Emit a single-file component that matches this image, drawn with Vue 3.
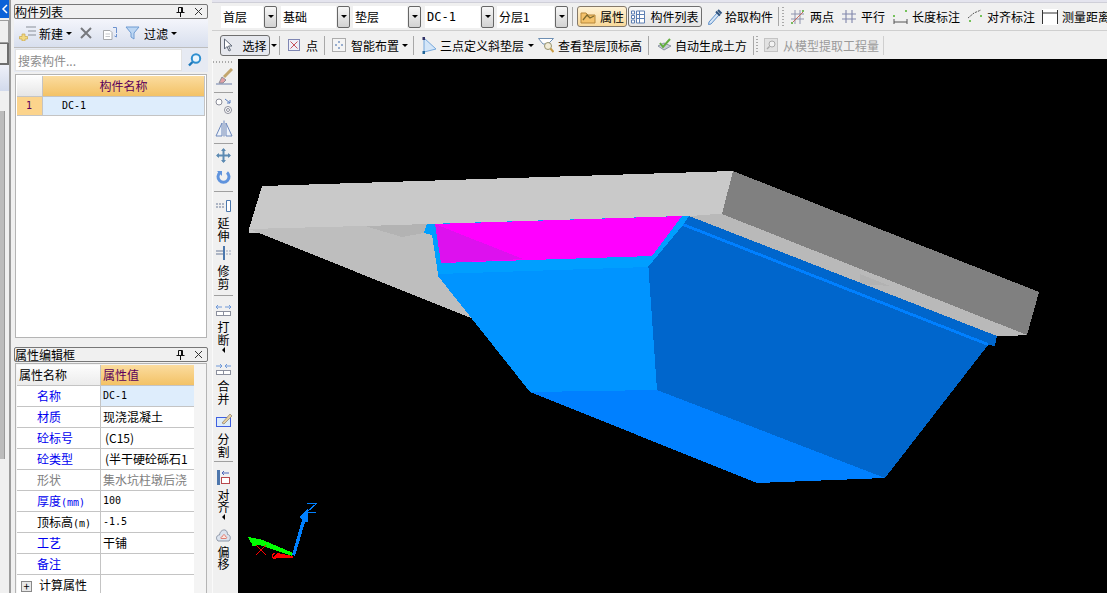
<script setup>
const rowOneSelects = [
  { label: '首层', w: 42, mr: 4 },
  { label: '基础', w: 55, mr: 3 },
  { label: '垫层', w: 54, mr: 4 },
  { label: 'DC-1', w: 55, mr: 3, latin: true },
  { label: '分层1', w: 57, mr: 0 }
]

const attrs = [
  { name: '名称', value: 'DC-1', blue: true, active: true, latin: true },
  { name: '材质', value: '现浇混凝土', blue: true },
  { name: '砼标号', value: '(C15)', blue: true, pad: true },
  { name: '砼类型', value: '(半干硬砼砾石1', blue: true, pad: true },
  { name: '形状', value: '集水坑柱墩后浇', grey: true },
  { name: '厚度', unit: '(mm)', value: '100', blue: true, latin: true },
  { name: '顶标高', unit: '(m)', value: '-1.5', latin: true },
  { name: '工艺', value: '干铺', blue: true },
  { name: '备注', value: '', blue: true }
]
</script>

<template>
  <div class="app">
    <!-- 最左边被挡住的导航条 -->
    <div class="edge">
      <div class="edge-blue">
        <svg width="8" height="12" viewBox="0 0 8 12"><path d="M6 2 L2 6 L6 10" fill="none" stroke="#fff" stroke-width="1.5" /></svg>
      </div>
      <div class="edge-tab"></div>
      <div class="edge-tab dark"></div>
      <div class="edge-lilac"></div>
      <div class="edge-list"><div class="edge-scroll"></div></div>
    </div>

    <div class="side">
      <section class="panel list-panel">
        <div class="panel-title">
          <span>构件列表</span>
          <span class="title-icons">
            <svg width="9" height="10" viewBox="0 0 9 10"><path d="M2.500 0.500H6.500V5.500H2.500ZM0.500 5.500H8.500M4.500 5.500V10M5.500 1V5" fill="none" stroke="#111" /></svg>
            <svg width="9" height="9" viewBox="0 0 9 9"><path d="M1 1L8 8M8 1L1 8" stroke="#333" /></svg>
          </span>
        </div>
        <div class="list-tools">
          <svg class="tool-new" width="18" height="16" viewBox="0 0 18 16">
            <path d="M7 2H17M9 6H17M9 10H17" stroke="#8a8f9a" stroke-width="1.200" />
            <path d="M3 9H6V11.500H8.500V14H6V16H3V14H0.500V11.500H3Z" fill="#f2d983" stroke="#c8a84b" stroke-width="0.700" />
          </svg>
          <span class="tool-text">新建</span>
          <i class="caret"></i>
          <svg class="tool-del" width="14" height="14" viewBox="0 0 14 14"><path d="M2 2L12 12M12 2L2 12" stroke="#77797e" stroke-width="2" /></svg>
          <svg class="tool-copy" width="17" height="15" viewBox="0 0 17 15">
            <path d="M1.500 4.500H8L10 6.500V13.500H1.500Z" fill="#fff" stroke="#a7a9ad" />
            <path d="M3.500 8H8M3.500 10.500H8" stroke="#c5c7cb" />
            <path d="M11 1.500H14.500V7M14.500 8V11L12.500 10" fill="none" stroke="#6d92cf" />
          </svg>
          <svg class="tool-filter" width="15" height="14" viewBox="0 0 15 14"><path d="M1 1H14L9 7V13L6 11V7Z" fill="#bcd6f3" stroke="#6e9bd2" /></svg>
          <span class="tool-text">过滤</span>
          <i class="caret"></i>
        </div>
        <div class="search-row">
          <div class="search-box">搜索构件...</div>
          <svg class="search-icon" width="16" height="16" viewBox="0 0 16 16">
            <circle cx="9" cy="6.500" r="4.200" fill="#eaf5fd" stroke="#2f8fd0" stroke-width="2" />
            <path d="M5.500 10L2 13.500" stroke="#1c78bb" stroke-width="2.400" />
          </svg>
        </div>
        <div class="grid-wrap">
          <div class="grid-head">
            <div class="corner"></div>
            <div class="head-cell">构件名称</div>
          </div>
          <div class="grid-row">
            <div class="row-no">1</div>
            <div class="row-name">DC-1</div>
          </div>
        </div>
      </section>

      <section class="panel attr-panel">
        <div class="panel-title">
          <span>属性编辑框</span>
          <span class="title-icons">
            <svg width="9" height="10" viewBox="0 0 9 10"><path d="M2.500 0.500H6.500V5.500H2.500ZM0.500 5.500H8.500M4.500 5.500V10M5.500 1V5" fill="none" stroke="#111" /></svg>
            <svg width="9" height="9" viewBox="0 0 9 9"><path d="M1 1L8 8M8 1L1 8" stroke="#333" /></svg>
          </span>
        </div>
        <div class="attr-wrap">
          <div class="attr-table">
            <div class="attr-row attr-head">
              <div class="attr-name">属性名称</div>
              <div class="attr-value">属性值</div>
            </div>
            <div v-for="a in attrs" :key="a.name" class="attr-row">
              <div class="attr-name indent" :class="{ blue: a.blue, grey: a.grey }">{{ a.name }}<span v-if="a.unit" class="unit">{{ a.unit }}</span></div>
              <div class="attr-value" :class="{ active: a.active, grey: a.grey, latin: a.latin, pad: a.pad }">{{ a.value }}</div>
            </div>
            <div class="attr-row">
              <div class="attr-name"><span class="plus">+</span>计算属性</div>
              <div class="attr-value"></div>
            </div>
          </div>
        </div>
      </section>
    </div>

    <div class="main">
      <div class="topline"></div>
      <div class="bar bar-one">
        <div v-for="s in rowOneSelects" :key="s.label" class="select" :style="{ marginRight: s.mr + 'px' }">
          <div class="select-text" :class="{ wide: s.latin }" :style="{ width: s.w + 'px' }">{{ s.label }}</div>
          <div class="select-btn"><i class="caret"></i></div>
        </div>
        <i class="sep first-sep"></i>
        <button class="toggle prop-btn">
          <svg width="16" height="14" viewBox="0 0 16 14">
            <path d="M1 3H6L8 5H15V13H1Z" fill="#f4c26b" stroke="#b7873a" />
            <path d="M3 10L7 5L10 8L14 6" fill="none" stroke="#7e6a2f" stroke-width="1.300" />
          </svg>
          属性
        </button>
        <button class="toggle list-btn">
          <svg width="14" height="14" viewBox="0 0 14 14">
            <path d="M0.500 1H3.500V4H0.500ZM0.500 5.500H3.500V8.500H0.500ZM0.500 10H3.500V13H0.500Z" fill="#fff" stroke="#5d7fb3" />
            <path d="M5.500 1H13.500V13H5.500ZM5.500 4.500H13.500M5.500 8.500H13.500M8.500 1V13" fill="#fff" stroke="#5d7fb3" />
          </svg>
          构件列表
        </button>
        <svg class="ico pick" width="16" height="18" viewBox="0 0 16 18">
          <path d="M10 5L2 14L1.500 16.500L4 16L12 7Z" fill="#d5e5f6" stroke="#5d8fc9" />
          <path d="M9 3.500L13 7.500M11 2L14.500 5.500" stroke="#32557f" stroke-width="2" />
        </svg>
        <span class="lbl pick-lbl">拾取构件</span>
        <i class="sep pick-sep"></i>
        <i class="grip"></i>
        <svg class="ico m6" width="15" height="16" viewBox="0 0 15 16">
          <path d="M5 1V15M10 1V15M1 5H14M1 10H14" stroke="#8e93ae" />
          <path d="M1 15L14 2" stroke="#c36a5c" />
          <rect x="12" y="1" width="2" height="2" fill="#78bb5e" /><rect x="1" y="13" width="2" height="2" fill="#78bb5e" />
        </svg>
        <span class="lbl m5">两点</span>
        <svg class="ico m8" width="14" height="15" viewBox="0 0 14 15"><path d="M4 1V14M10 1V14M0 5H14M0 10H14" stroke="#8086ab" stroke-width="1.100" /></svg>
        <span class="lbl m5">平行</span>
        <svg class="ico m8" width="15" height="16" viewBox="0 0 15 16">
          <path d="M1 10V15M14 10V15M1 13H14" stroke="#555" />
          <rect x="0" y="6" width="2" height="2" fill="#75c25a" /><rect x="12" y="1" width="2" height="2" fill="#75c25a" />
        </svg>
        <span class="lbl m4">长度标注</span>
        <svg class="ico m7" width="16" height="15" viewBox="0 0 16 15">
          <path d="M1 9L7 4L14 1" fill="none" stroke="#555" stroke-dasharray="2 1" />
          <rect x="2" y="11" width="2" height="2" fill="#75c25a" /><rect x="13" y="6" width="2" height="2" fill="#75c25a" />
        </svg>
        <span class="lbl m4">对齐标注</span>
        <svg class="ico m7" width="16" height="16" viewBox="0 0 16 16">
          <rect x="0" y="0" width="16" height="16" fill="#fff" />
          <path d="M0.500 1V15M15.500 1V15M1 4H15" stroke="#333" />
        </svg>
        <span class="lbl m4">测量距离</span>
      </div>

      <div class="bar bar-two">
        <button class="toggle pick-mode">
          <svg width="10" height="14" viewBox="0 0 10 14"><path d="M1.500 1V11L4 8.500L6 13L7.500 12.300L5.500 8H9Z" fill="#fff" stroke="#5f6878" /></svg>
          选择
        </button>
        <i class="caret m1"></i>
        <i class="sep m2"></i>
        <svg class="ico m8" width="12" height="12" viewBox="0 0 12 12">
          <rect x="0.500" y="0.500" width="11" height="11" fill="#eef0f8" stroke="#7f86b3" />
          <path d="M2.500 2.500L9.500 9.500M9.500 2.500L2.500 9.500" stroke="#c6525a" />
        </svg>
        <span class="lbl m6">点</span>
        <i class="sep m6"></i>
        <svg class="ico m7" width="14" height="14" viewBox="0 0 14 14">
          <rect x="0.500" y="0.500" width="13" height="13" fill="#f4f4f4" stroke="#666" stroke-dasharray="1 1" />
          <path d="M7 3V5M7 9V11M3 7H5M9 7H11" stroke="#3c69aa" />
        </svg>
        <span class="lbl m5">智能布置</span>
        <i class="caret m3"></i>
        <i class="sep m5"></i>
        <svg class="ico m8" width="15" height="17" viewBox="0 0 15 17">
          <path d="M2 1L14 12L2 15Z" fill="#d4e6f8" stroke="#76a8dc" />
          <rect x="0.500" y="0" width="2.500" height="3" fill="#336" /><rect x="0.500" y="14" width="2.500" height="3" fill="#269" />
        </svg>
        <span class="lbl m3">三点定义斜垫层</span>
        <i class="caret m4"></i>
        <svg class="ico m4" width="16" height="16" viewBox="0 0 16 16">
          <path d="M0.500 1.500H15.500L10 7H5Z" fill="#fff" stroke="#6e8fb3" />
          <circle cx="10" cy="9" r="3.500" fill="#f1ecd7" stroke="#96926e" />
          <path d="M12.500 11.500L15.500 15" stroke="#c89b44" stroke-width="2" />
        </svg>
        <span class="lbl m4">查看垫层顶标高</span>
        <i class="sep m6"></i>
        <svg class="ico m8" width="15" height="14" viewBox="0 0 15 14">
          <path d="M1 8L7 12L14 8L7 5Z" fill="#c7ccd5" stroke="#8d95a3" />
          <path d="M3 5L6 9L13 1" fill="none" stroke="#62ad3f" stroke-width="2" />
        </svg>
        <span class="lbl m3">自动生成土方</span>
        <i class="sep m6"></i>
        <i class="grip small"></i>
        <svg class="ico m6" width="14" height="14" viewBox="0 0 14 14">
          <rect x="0.500" y="0.500" width="13" height="13" fill="#e2e2e2" stroke="#c4c4c4" />
          <circle cx="8" cy="6" r="3" fill="#f2f2f2" stroke="#aaa" /><path d="M5.500 8.500L3 11" stroke="#aaa" stroke-width="1.500" />
        </svg>
        <span class="lbl m5 disabled">从模型提取工程量</span>
        <i class="sep m4 light"></i>
      </div>

      <div class="work">
        <div class="vtools">
          <i class="vgrip"></i>
          <svg class="vico t5" width="18" height="18" viewBox="0 0 18 18">
            <path d="M17 1L9 9" stroke="#c3a66d" stroke-width="3" />
            <path d="M7 9L11 12L8 15H4Z" fill="#e2a0a5" stroke="#8e8e98" />
            <path d="M1 16H17" stroke="#6c7ea8" />
          </svg>
          <i class="vsep t6"></i>
          <svg class="vico t4" width="18" height="17" viewBox="0 0 18 17">
            <circle cx="4" cy="5" r="3" fill="#fff" stroke="#8b8d99" /><circle cx="13" cy="13" r="3.500" fill="#fff" stroke="#8b8d99" />
            <circle cx="13" cy="13" r="1.500" fill="none" stroke="#8b8d99" /><path d="M10 2L15 6M15 3V6H12" fill="none" stroke="#5a7ec0" />
          </svg>
          <svg class="vico t6" width="18" height="17" viewBox="0 0 18 17">
            <path d="M9 0.500V16.500" stroke="#6d88bc" /><path d="M7 3V16H1ZM11 3V16H17Z" fill="#eef3fa" stroke="#6d88bc" />
          </svg>
          <i class="vsep t6"></i>
          <svg class="vico t4" width="15" height="15" viewBox="0 0 15 15">
            <path d="M7.500 1V14M1 7.500H14" stroke="#5d8bb3" stroke-width="2" />
            <path d="M7.500 0L10 3H5ZM7.500 15L10 12H5ZM0 7.500L3 5V10ZM15 7.500L12 5V10Z" fill="#5d8bb3" />
          </svg>
          <svg class="vico t7" width="15" height="15" viewBox="0 0 15 15">
            <path d="M4 2.500A5.500 5.500 0 1 0 11 2.500" fill="none" stroke="#5f93dd" stroke-width="3" />
            <path d="M1 1H6V6Z" fill="#5f93dd" />
          </svg>
          <i class="vsep t6"></i>
          <div class="vitem t8">
            <svg width="15" height="12" viewBox="0 0 15 12">
              <path d="M10.500 0.500H14.500V11.500H10.500Z" fill="#fff" stroke="#4b77ad" />
              <path d="M0 4H9M0 7H9" stroke="#6a7a99" stroke-dasharray="2 1" />
            </svg>
            <span>延</span><span>伸</span>
          </div>
          <div class="vitem t4">
            <svg width="15" height="14" viewBox="0 0 15 14">
              <path d="M8 0V14" stroke="#4b77ad" stroke-width="2" /><path d="M0 5H7M0 8H7" stroke="#6a7a99" /><path d="M10 5H15M10 8H15" stroke="#9aa5bc" stroke-dasharray="2 1" />
            </svg>
            <span>修</span><span>剪</span>
          </div>
          <i class="vsep t5"></i>
          <div class="vitem t8">
            <svg width="15" height="12" viewBox="0 0 15 12">
              <path d="M0 3H6M9 3H15M2 1L0 3L2 5M13 1L15 3L13 5" fill="none" stroke="#6e98d8" />
              <rect x="0.500" y="7.500" width="14" height="4" fill="#fff" stroke="#8b8f9d" /><path d="M7.500 7V12" stroke="#8b8f9d" />
            </svg>
            <span>打</span><span>断</span>
            <i class="vcaret"></i>
          </div>
          <div class="vitem t10">
            <svg width="15" height="12" viewBox="0 0 15 12">
              <path d="M0 3H6M9 3H15M4 1L6 3L4 5M11 1L9 3L11 5" fill="none" stroke="#6e98d8" />
              <rect x="0.500" y="7.500" width="14" height="4" fill="#fff" stroke="#8b8f9d" /><path d="M7.500 7V12" stroke="#8b8f9d" />
            </svg>
            <span>合</span><span>并</span>
          </div>
          <div class="vitem t8">
            <svg width="16" height="15" viewBox="0 0 16 15">
              <rect x="0.500" y="4.500" width="14" height="9" fill="#dcecfb" stroke="#3f5fe0" />
              <path d="M6 10L14 1L16 3L8 11Z" fill="#e7cfa0" stroke="#8c7f6a" stroke-width="0.700" />
            </svg>
            <span>分</span><span>割</span>
          </div>
          <i class="vsep t3"></i>
          <div class="vitem t8 tight">
            <svg width="13" height="15" viewBox="0 0 13 15">
              <path d="M1.500 0V15" stroke="#4e77ad" stroke-width="3" />
              <rect x="4.500" y="7.500" width="8" height="6" fill="#fff" stroke="#b8484b" />
              <path d="M5 3H12M5 3L7 1M5 3L7 5" fill="none" stroke="#4f66b8" />
            </svg>
            <span>对</span><span>齐</span>
            <i class="vcaret"></i>
          </div>
          <div class="vitem t9 tight">
            <svg width="15" height="13" viewBox="0 0 15 13">
              <path d="M2 12C-1 9 1 6 3.500 6C4 2 7 0.500 9 1C11 1.500 11.500 4 11.500 5.500C14 5.500 15.500 9 13 12Z" fill="#dbe3ee" stroke="#8d97a8" />
              <path d="M5 9.500C4.500 8 6 7.500 6.500 7.500C7 5 9 5 9.500 7.500C11 7.500 11 9.500 10 9.500Z" fill="#fbe6e0" stroke="#df7f73" />
            </svg>
            <span>偏</span><span>移</span>
          </div>
        </div>

        <div class="canvas">
          <svg width="869" height="534" viewBox="238 59 869 534" shape-rendering="crispEdges">
            <!-- 垫层伸出基坑的部分 -->
            <polygon points="249,228 722,213 722,218 249,233" fill="#c9c9c9" />
            <polygon points="249,229 471,318 480,318 438,270 432,235 424,233 427,224 400,225" fill="#bebebe" />
            <polygon points="365,226 427,224 424,233 402,237" fill="#b3b3b3" />
            <polygon points="689,216 722,214 1027,335 997,336" fill="#b9b9b9" />
            <!-- 顶板 -->
            <polygon points="262,186 733,171 722,214 249,229" fill="#c9c9c9" />
            <polygon points="733,171 1039,292 1027,335 722,214" fill="#808080" />
            <polygon points="722,214 1027,335 1010,336 697,215" fill="#b9b9b9" />
            <polygon points="860,274 890,286 860,284" fill="#b2b2b2" />
            <!-- 基坑 -->
            <polygon points="689,216 997,336 995,346 988,345 683,225" fill="#0066cc" />
            <polygon points="683,225 648,267 657,390 885,478 988,345" fill="#0066cc" />
            <polygon points="683,223 988,343 988,346 683,226" fill="#0080ff" />
            <polygon points="438,270 648,261 657,390 530,392 438,276" fill="#0094ff" />
            <polygon points="530,392 657,390 885,478 757,483" fill="#0080ff" />
            <polygon points="427,224 682,216 689,216 683,225 648,267 438,274 432,235 424,233" fill="#009fff" />
            <polygon points="435,224 682,216 652,256 441,263" fill="#ff00ff" />
            <polygon points="435,224 523,259 441,263" fill="#dd11ee" />
            <!-- 坐标轴 -->
            <polygon points="277,553 293,556 293,558 273,558" fill="#ff0000" />
            <polygon points="248,537 263,540 293,553 292,556 260,545 253,546" fill="#00ff00" />
            <path d="M252 540V546" stroke="#00ff00" fill="none" />
            <path d="M275 553L272 555L273 558L276 559M256 545L266 555M266 545L256 555" stroke="#ff0000" fill="none" />
            <polygon points="292,555 302,520 300,517 308,508 308,522 305,522 295,556" fill="#0080ff" />
            <path d="M307 503H317L307 512H316" stroke="#0080ff" fill="none" />
          </svg>
        </div>
      </div>
    </div>
  </div>
</template>

<style scoped>
.app {
  width: 1107px;
  height: 593px;
  display: flex;
  overflow: hidden;
  background: #f0f0f0;
  font-family: "Noto Sans CJK SC", "Liberation Sans", sans-serif;
  font-size: 12px;
  color: #000;
}
.edge {
  width: 9px;
  flex: none;
  height: 593px;
  border-right: 2px solid #9c9c9c;
  box-sizing: content-box;
  display: flex;
  flex-direction: column;
  margin-right: 3px;
}
.edge-blue {
  height: 18px;
  background: #0b62d8;
  display: flex;
  align-items: center;
  justify-content: flex-end;
}
.edge-tab {
  height: 21px;
  margin-top: 2px;
  background: #efefef;
  border: 1px solid #9d9d9d;
  border-left: 0;
}
.edge-tab.dark {
  height: 19px;
  margin-top: 0;
  border-color: #6d6d6d;
  border-width: 1px 2px 2px 0;
}
.edge-lilac {
  height: 26px;
  background: linear-gradient(#eef0f8, #d2daec);
}
.edge-list {
  flex: 1;
  background: #f0f0f0;
  padding-top: 20px;
}
.edge-scroll {
  width: 4px;
  height: 348px;
  background: #bcbcbc;
  border-right: 1px solid #9a9a9a;
}
.side {
  width: 194px;
  flex: none;
  display: flex;
  flex-direction: column;
  padding-top: 4px;
  margin-right: 4px;
  box-sizing: border-box;
}
.panel {
  display: flex;
  flex-direction: column;
}
.list-panel {
  height: 334px;
}
.attr-panel {
  margin-top: 9px;
  flex: 1;
  min-height: 0;
}
.panel-title {
  height: 13px;
  flex: none;
  border: 1px solid #777;
  border-radius: 2px;
  background: #f0f0f0;
  line-height: 13px;
  display: flex;
  align-items: center;
  justify-content: space-between;
  box-sizing: content-box;
  width: 192px;
}
.title-icons {
  display: flex;
  align-items: center;
  gap: 9px;
  padding-right: 4px;
}
.list-tools {
  height: 28px;
  flex: none;
  display: flex;
  align-items: center;
  background: linear-gradient(#f4f5fb, #d8dfee);
  padding-left: 5px;
}
.tool-text {
  margin-left: 2px;
}
.caret {
  display: inline-block;
  flex: none;
  width: 0;
  height: 0;
  border-left: 3px solid transparent;
  border-right: 3px solid transparent;
  border-top: 3px solid #000;
}
.list-tools .caret {
  margin-left: 3px;
}
.tool-del {
  margin-left: 7px;
}
.tool-copy {
  margin-left: 9px;
}
.tool-filter {
  margin-left: 6px;
  margin-right: 2px;
}
.search-row {
  height: 24px;
  flex: none;
  display: flex;
  align-items: center;
  background: #e6eaf3;
  border-top: 1px solid #bdbdbd;
}
.search-box {
  width: 167px;
  height: 22px;
  margin-left: 1px;
  padding-left: 2px;
  box-sizing: border-box;
  background: #fff;
  color: #8c8c8c;
  line-height: 22px;
  border: 1px solid #e2e2e2;
}
.search-icon {
  margin-left: 5px;
}
.grid-wrap {
  flex: 1;
  margin: 2px 1px 0 1px;
  background: #fff;
  border: 1px solid #b4b4b4;
  padding: 1px;
}
.grid-head {
  height: 21px;
  display: flex;
}
.corner {
  width: 26px;
  background: linear-gradient(#fdfdfd, #e6e6e6);
  border-right: 1px solid #c4c4c4;
  border-bottom: 1px solid #c4c4c4;
  box-sizing: border-box;
}
.head-cell {
  flex: 1;
  background: linear-gradient(#fbdc9f, #f3c266);
  color: #5b005b;
  text-align: center;
  line-height: 20px;
  border-bottom: 1px solid #c4c4c4;
  border-right: 1px solid #c4c4c4;
}
.grid-row {
  height: 19px;
  display: flex;
}
.row-no {
  width: 26px;
  background: #fcd48c;
  color: #5b005b;
  font-family: "DejaVu Sans Mono", monospace;
  font-size: 10px;
  line-height: 18px;
  padding-left: 9px;
  box-sizing: border-box;
  border-right: 1px solid #c4c4c4;
  border-bottom: 1px solid #c4c4c4;
}
.row-name {
  flex: 1;
  background: #deedfc;
  font-family: "DejaVu Sans Mono", monospace;
  font-size: 10px;
  line-height: 18px;
  padding-left: 19px;
  border-bottom: 1px solid #c4c4c4;
  border-right: 1px solid #c4c4c4;
}
.attr-wrap {
  flex: 1;
  min-height: 0;
  margin: 1px 1px 0 1px;
  border: 1px solid #b4b4b4;
  border-bottom: 0;
  padding: 1px;
  overflow: hidden;
  background: #f4f4f4;
}
.attr-table {
  width: 177px;
  background: #fff;
}
.attr-row {
  height: 21px;
  display: flex;
  box-sizing: border-box;
  border-bottom: 1px solid #c4c4c4;
}
.attr-name {
  width: 84px;
  flex: none;
  box-sizing: border-box;
  border-right: 1px solid #c4c4c4;
  padding-left: 2px;
  line-height: 20px;
  white-space: nowrap;
}
.attr-name.indent {
  padding-left: 20px;
}
.unit {
  font-family: "DejaVu Sans Mono", monospace;
  font-size: 10px;
}
.attr-value {
  flex: 1;
  padding-left: 2px;
  line-height: 20px;
  white-space: nowrap;
  overflow: hidden;
}
.attr-head .attr-value {
  background: linear-gradient(#fbdc9f, #f3c266);
  color: #5b005b;
}
.attr-head .attr-name {
  background: linear-gradient(#fdfdfd, #ececec);
}
.blue {
  color: #0000f0;
}
.grey {
  color: #808080;
}
.active {
  background: #deedfc;
}
.latin {
  font-family: "DejaVu Sans Mono", monospace;
  font-size: 10px;
}
.pad {
  padding-left: 4px;
}
.plus {
  display: inline-block;
  width: 11px;
  height: 11px;
  border: 1px solid #888;
  background: #e8e8e8;
  margin: 0 7px 0 2px;
  line-height: 9px;
  text-align: center;
  font-size: 11px;
  vertical-align: -1px;
  box-sizing: border-box;
}
.main {
  flex: 1;
  min-width: 0;
  display: flex;
  flex-direction: column;
}
.topline {
  height: 3px;
  flex: none;
  background: #e4e4ee;
  border-bottom: 1px solid #cfcfd8;
  box-sizing: border-box;
}
.bar {
  flex: none;
  display: flex;
  align-items: center;
  white-space: nowrap;
  overflow: hidden;
}
.bar-one {
  height: 28px;
  padding-left: 9px;
  border-bottom: 1px solid #cfcfcf;
  box-sizing: border-box;
}
.bar-two {
  height: 28px;
  padding-left: 8px;
}
.select {
  display: flex;
  height: 22px;
  flex: none;
}
.select-text {
  background: #fff;
  line-height: 22px;
  padding-left: 2px;
  box-sizing: border-box;
  margin-right: 1px;
}
.select-text.wide {
  font-family: "DejaVu Sans Mono", monospace;
}
.select-btn {
  width: 13px;
  background: linear-gradient(#f7f7f7, #d2d2d2);
  border: 1px solid #666;
  border-radius: 2px;
  box-sizing: border-box;
  display: flex;
  align-items: center;
  justify-content: center;
}
.sep {
  width: 1px;
  height: 19px;
  flex: none;
  background: #a8a8a8;
}
.sep.light {
  background: #cfcfcf;
}
.first-sep {
  margin: 0 4px;
}
.toggle {
  height: 21px;
  flex: none;
  padding: 0;
  border: 1px solid #6f6f6f;
  border-radius: 3px;
  background: linear-gradient(#f8f8f8, #e4e4e4);
  font: inherit;
  color: #000;
  display: flex;
  align-items: center;
  justify-content: center;
  gap: 4px;
  box-sizing: border-box;
}
.prop-btn {
  width: 50px;
  background: linear-gradient(#fff2d5, #f9d99a);
  border-color: #85796a;
}
.list-btn {
  width: 74px;
  margin-left: 1px;
  gap: 5px;
}
.pick {
  margin-left: 5px;
}
.lbl {
  flex: none;
}
.pick-lbl {
  margin-left: 2px;
}
.pick-sep {
  margin-left: 5px;
}
.grip {
  width: 2px;
  height: 20px;
  margin-left: 3px;
  background: repeating-linear-gradient(#a9a9a9 0 1px, transparent 1px 3px);
  flex: none;
}
.grip.small {
  height: 18px;
  margin-left: 2px;
}
.ico {
  flex: none;
}
.m1 { margin-left: 1px; }
.m2 { margin-left: 2px; }
.m3 { margin-left: 3px; }
.m4 { margin-left: 4px; }
.m5 { margin-left: 5px; }
.m6 { margin-left: 6px; }
.m7 { margin-left: 7px; }
.m8 { margin-left: 8px; }
.pick-mode {
  width: 50px;
  background: #e6e8ee;
  gap: 9px;
}
.disabled {
  color: #9a9a9a;
}
.work {
  flex: 1;
  min-height: 0;
  display: flex;
}
.vtools {
  width: 26px;
  flex: none;
  box-sizing: border-box;
  padding-right: 4px;
  background: #f0f0f0;
  border-left: 1px solid #fafafa;
  display: flex;
  flex-direction: column;
  align-items: center;
  overflow: hidden;
}
.vgrip {
  width: 21px;
  height: 2px;
  flex: none;
  margin-top: 2px;
  background: repeating-linear-gradient(90deg, #a9a9a9 0 1px, transparent 1px 3px);
}
.vico {
  flex: none;
}
.vsep {
  width: 19px;
  height: 1px;
  flex: none;
  background: #a0a0a0;
}
.vitem {
  flex: none;
  display: flex;
  flex-direction: column;
  align-items: center;
  line-height: 13px;
}
.vitem.tight {
  line-height: 12px;
}
.vitem span {
  display: block;
}
.vitem svg {
  margin-bottom: 4px;
}
.vcaret {
  width: 0;
  height: 0;
  margin-top: 1px;
  border-top: 3px solid transparent;
  border-bottom: 3px solid transparent;
  border-right: 3px solid #000;
}
.t3 { margin-top: 3px; }
.t4 { margin-top: 4px; }
.t5 { margin-top: 5px; }
.t6 { margin-top: 6px; }
.t7 { margin-top: 7px; }
.t8 { margin-top: 8px; }
.t9 { margin-top: 9px; }
.t10 { margin-top: 10px; }
.canvas {
  flex: 1;
  background: #000;
  overflow: hidden;
}
.canvas svg {
  display: block;
}
</style>

<style>
html, body {
  margin: 0;
  overflow: hidden;
}
</style>
